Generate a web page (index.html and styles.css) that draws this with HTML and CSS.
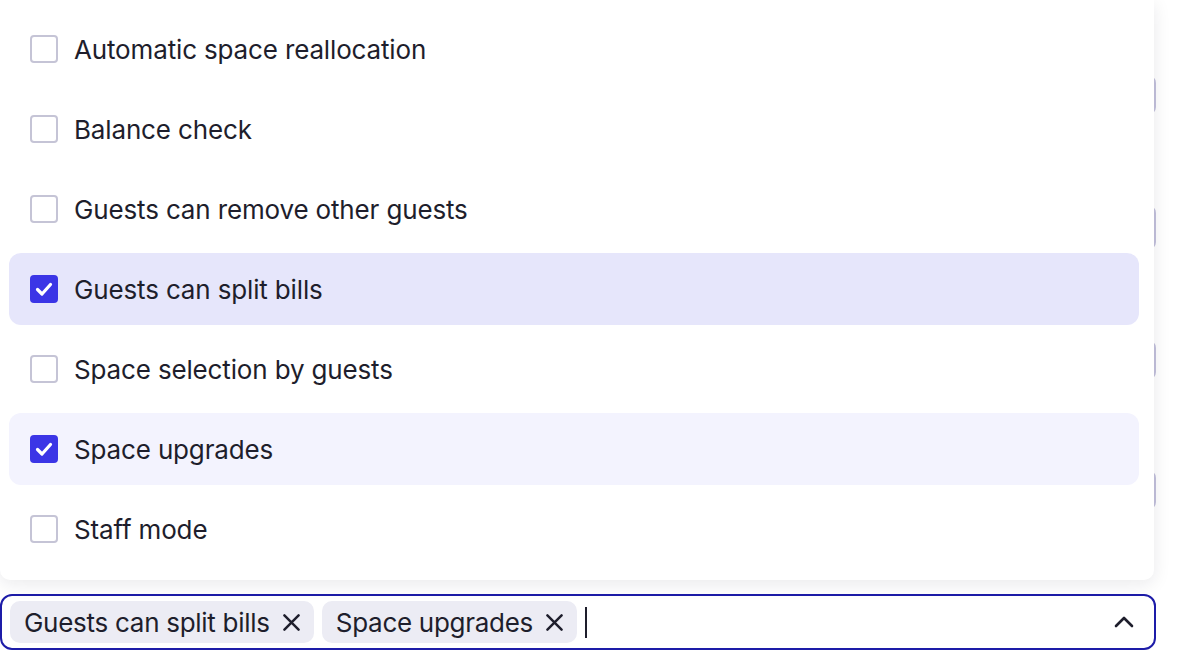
FILE: index.html
```html
<!DOCTYPE html>
<html>
<head>
<meta charset="utf-8">
<link rel="stylesheet" href="styles.css">
</head>
<body>
<div class="page">
  <div class="form">
    <div class="field f1"></div>
    <div class="field f2"></div>
    <div class="field f3"></div>
    <div class="field f4"></div>
  </div>
  <div class="combo">
    <span class="chip">Guests can split bills<svg class="x" viewBox="0 0 18 18"><path d="M1.5 1.5L16.5 16.5M16.5 1.5L1.5 16.5"/></svg></span>
    <span class="chip">Space upgrades<svg class="x" viewBox="0 0 18 18"><path d="M1.5 1.5L16.5 16.5M16.5 1.5L1.5 16.5"/></svg></span>
    <span class="caret"></span>
    <svg class="chev" viewBox="0 0 20 12"><path d="M2 10L10 2L18 10"/></svg>
  </div>
  <div class="menu">
    <div class="opt"><span class="box"></span><span class="lbl">Automatic space reallocation</span></div>
    <div class="opt"><span class="box"></span><span class="lbl">Balance check</span></div>
    <div class="opt"><span class="box"></span><span class="lbl">Guests can remove other guests</span></div>
    <div class="opt active"><span class="box on"><svg viewBox="0 0 28 28"><path d="M7.5 14.5L12 19L20.5 9.5"/></svg></span><span class="lbl">Guests can split bills</span></div>
    <div class="opt"><span class="box"></span><span class="lbl">Space selection by guests</span></div>
    <div class="opt sel"><span class="box on"><svg viewBox="0 0 28 28"><path d="M7.5 14.5L12 19L20.5 9.5"/></svg></span><span class="lbl">Space upgrades</span></div>
    <div class="opt"><span class="box"></span><span class="lbl">Staff mode</span></div>
  </div>
</div>
</body>
</html>
```
FILE: styles.css
```css
html, body {
  margin: 0;
  padding: 0;
  background: #ffffff;
  font-family: Inter, "Noto Sans", sans-serif;
  color: #1e1e2c;
  overflow: hidden;
}
.page {
  position: relative;
  width: 1156px;
  height: 660px;
}
.form {
  display: flex;
  flex-direction: column;
  height: 594px;
}
.field {
  height: 40px;
  border: 2px solid #c3c1dc;
  border-radius: 8px;
  box-sizing: border-box;
}
.f1 { margin-top: 75px; }
.f2 { margin-top: 90px; height: 45px; }
.f3 { margin-top: 90px; }
.f4 { margin-top: 90px; }
.combo {
  box-sizing: border-box;
  height: 56px;
  border: 2px solid #1d1ca8;
  border-radius: 12px;
  display: flex;
  align-items: center;
  padding: 0 20px 0 8px;
  gap: 8px;
}
.chip {
  display: inline-flex;
  align-items: center;
  height: 42px;
  padding: 0 14px;
  background: #ececf4;
  border-radius: 10px;
  font-size: 26px;
  letter-spacing: -0.28px;
  white-space: nowrap;
}
.x {
  width: 17px;
  height: 17px;
  margin-left: 13px;
  fill: none;
  stroke: #1e1e2c;
  stroke-width: 2.6;
  stroke-linecap: round;
}
.caret {
  width: 2px;
  height: 31px;
  background: #1e1e2c;
}
.chev {
  margin-left: auto;
  width: 20px;
  height: 12px;
  fill: none;
  stroke: #1e1e2c;
  stroke-width: 2.6;
  stroke-linecap: round;
  stroke-linejoin: round;
}
.menu {
  position: absolute;
  left: 0;
  top: 0;
  width: 1154px;
  height: 580px;
  box-sizing: border-box;
  background: #ffffff;
  border-radius: 0 0 10px 10px;
  box-shadow: 0 4px 18px rgba(20, 20, 40, 0.09);
  padding: 13px 15px 15px 9px;
  display: flex;
  flex-direction: column;
  gap: 8px;
}
.opt {
  height: 72px;
  flex: none;
  display: flex;
  align-items: center;
  padding-left: 21px;
  border-radius: 12px;
}
.opt.active { background: #e6e6fb; }
.opt.sel { background: #f3f3fe; }
.box {
  width: 28px;
  height: 28px;
  box-sizing: border-box;
  border: 2px solid #c5c4d6;
  border-radius: 4px;
  flex: none;
  display: flex;
}
.box.on {
  border: none;
  background: #3b35e6;
}
.box svg {
  width: 28px;
  height: 28px;
  fill: none;
  stroke: #ffffff;
  stroke-width: 3.2;
  stroke-linecap: round;
  stroke-linejoin: round;
}
.lbl {
  margin-left: 16px;
  font-size: 26px;
  letter-spacing: -0.15px;
  white-space: nowrap;
}
```
